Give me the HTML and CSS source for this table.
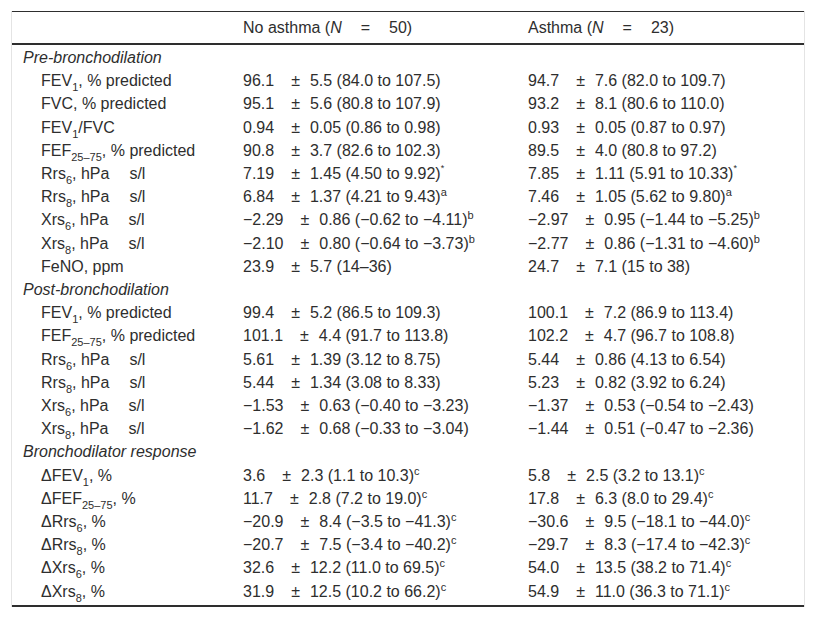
FILE: index.html
```html
<!DOCTYPE html>
<html>
<head>
<meta charset="utf-8">
<link rel="stylesheet" href="styles.css">
</head>
<body>
<div class="frame">
<table class="data">
<colgroup><col class="c1"><col class="c2"><col class="c3"></colgroup>
<thead>
<tr><th></th><th>No asthma (<i>N</i><span class="eq">=</span>50)</th><th>Asthma (<i>N</i><span class="eq">=</span>23)</th></tr>
</thead>
<tbody>
<tr class="sec"><td colspan="3"><i>Pre-bronchodilation</i></td></tr>
<tr><td class="lab">FEV<sub>1</sub>, % predicted</td><td>96.1<span class="pm">±</span>5.5 (84.0 to 107.5)</td><td>94.7<span class="pm">±</span>7.6 (82.0 to 109.7)</td></tr>
<tr><td class="lab">FVC, % predicted</td><td>95.1<span class="pm">±</span>5.6 (80.8 to 107.9)</td><td>93.2<span class="pm">±</span>8.1 (80.6 to 110.0)</td></tr>
<tr><td class="lab">FEV<sub>1</sub>/FVC</td><td>0.94<span class="pm">±</span>0.05 (0.86 to 0.98)</td><td>0.93<span class="pm">±</span>0.05 (0.87 to 0.97)</td></tr>
<tr><td class="lab">FEF<sub>25–75</sub>, % predicted</td><td>90.8<span class="pm">±</span>3.7 (82.6 to 102.3)</td><td>89.5<span class="pm">±</span>4.0 (80.8 to 97.2)</td></tr>
<tr><td class="lab">Rrs<sub>6</sub>, hPa<span class="u">s/l</span></td><td>7.19<span class="pm">±</span>1.45 (4.50 to 9.92)<sup class="st">*</sup></td><td>7.85<span class="pm">±</span>1.11 (5.91 to 10.33)<sup class="st">*</sup></td></tr>
<tr><td class="lab">Rrs<sub>8</sub>, hPa<span class="u">s/l</span></td><td>6.84<span class="pm">±</span>1.37 (4.21 to 9.43)<sup>a</sup></td><td>7.46<span class="pm">±</span>1.05 (5.62 to 9.80)<sup>a</sup></td></tr>
<tr><td class="lab">Xrs<sub>6</sub>, hPa<span class="u">s/l</span></td><td>−2.29<span class="pm">±</span>0.86 (−0.62 to −4.11)<sup>b</sup></td><td>−2.97<span class="pm">±</span>0.95 (−1.44 to −5.25)<sup>b</sup></td></tr>
<tr><td class="lab">Xrs<sub>8</sub>, hPa<span class="u">s/l</span></td><td>−2.10<span class="pm">±</span>0.80 (−0.64 to −3.73)<sup>b</sup></td><td>−2.77<span class="pm">±</span>0.86 (−1.31 to −4.60)<sup>b</sup></td></tr>
<tr><td class="lab">FeNO, ppm</td><td>23.9<span class="pm">±</span>5.7 (14–36)</td><td>24.7<span class="pm">±</span>7.1 (15 to 38)</td></tr>
<tr class="sec"><td colspan="3"><i>Post-bronchodilation</i></td></tr>
<tr><td class="lab">FEV<sub>1</sub>, % predicted</td><td>99.4<span class="pm">±</span>5.2 (86.5 to 109.3)</td><td>100.1<span class="pm">±</span>7.2 (86.9 to 113.4)</td></tr>
<tr><td class="lab">FEF<sub>25–75</sub>, % predicted</td><td>101.1<span class="pm">±</span>4.4 (91.7 to 113.8)</td><td>102.2<span class="pm">±</span>4.7 (96.7 to 108.8)</td></tr>
<tr><td class="lab">Rrs<sub>6</sub>, hPa<span class="u">s/l</span></td><td>5.61<span class="pm">±</span>1.39 (3.12 to 8.75)</td><td>5.44<span class="pm">±</span>0.86 (4.13 to 6.54)</td></tr>
<tr><td class="lab">Rrs<sub>8</sub>, hPa<span class="u">s/l</span></td><td>5.44<span class="pm">±</span>1.34 (3.08 to 8.33)</td><td>5.23<span class="pm">±</span>0.82 (3.92 to 6.24)</td></tr>
<tr><td class="lab">Xrs<sub>6</sub>, hPa<span class="u">s/l</span></td><td>−1.53<span class="pm">±</span>0.63 (−0.40 to −3.23)</td><td>−1.37<span class="pm">±</span>0.53 (−0.54 to −2.43)</td></tr>
<tr><td class="lab">Xrs<sub>8</sub>, hPa<span class="u">s/l</span></td><td>−1.62<span class="pm">±</span>0.68 (−0.33 to −3.04)</td><td>−1.44<span class="pm">±</span>0.51 (−0.47 to −2.36)</td></tr>
<tr class="sec"><td colspan="3"><i>Bronchodilator response</i></td></tr>
<tr><td class="lab">ΔFEV<sub>1</sub>, %</td><td>3.6<span class="pm">±</span>2.3 (1.1 to 10.3)<sup>c</sup></td><td>5.8<span class="pm">±</span>2.5 (3.2 to 13.1)<sup>c</sup></td></tr>
<tr><td class="lab">ΔFEF<sub>25–75</sub>, %</td><td>11.7<span class="pm">±</span>2.8 (7.2 to 19.0)<sup>c</sup></td><td>17.8<span class="pm">±</span>6.3 (8.0 to 29.4)<sup>c</sup></td></tr>
<tr><td class="lab">ΔRrs<sub>6</sub>, %</td><td>−20.9<span class="pm">±</span>8.4 (−3.5 to −41.3)<sup>c</sup></td><td>−30.6<span class="pm">±</span>9.5 (−18.1 to −44.0)<sup>c</sup></td></tr>
<tr><td class="lab">ΔRrs<sub>8</sub>, %</td><td>−20.7<span class="pm">±</span>7.5 (−3.4 to −40.2)<sup>c</sup></td><td>−29.7<span class="pm">±</span>8.3 (−17.4 to −42.3)<sup>c</sup></td></tr>
<tr><td class="lab">ΔXrs<sub>6</sub>, %</td><td>32.6<span class="pm">±</span>12.2 (11.0 to 69.5)<sup>c</sup></td><td>54.0<span class="pm">±</span>13.5 (38.2 to 71.4)<sup>c</sup></td></tr>
<tr><td class="lab">ΔXrs<sub>8</sub>, %</td><td>31.9<span class="pm">±</span>12.5 (10.2 to 66.2)<sup>c</sup></td><td>54.9<span class="pm">±</span>11.0 (36.3 to 71.1)<sup>c</sup></td></tr>
</tbody>
</table>
</div>
</body>
</html>
```

FILE: styles.css
```css
html, body {
  margin: 0;
  padding: 0;
  background: #fff;
}
body {
  padding: 11px 10px 0 11px;
  font-family: "Liberation Sans", Arial, sans-serif;
  font-size: 16px;
  color: #2e2e2e;
}
.frame {
  width: 794px;
  border-left: 1px solid #e4e4e4;
  border-right: 1px solid #e4e4e4;
  box-sizing: border-box;
}
.data {
  width: 100%;
  border-collapse: collapse;
  table-layout: fixed;
  border-top: 1px solid #2e2e2e;
  border-bottom: 2px solid #2e2e2e;
}
.c1 { width: 221px; }
.c2 { width: 285px; }
.c3 { width: 286px; }
.data th {
  font-weight: normal;
  text-align: left;
  padding: 7px 10px 6px 10px;
  line-height: 18px;
  border-bottom: 2px solid #2e2e2e;
}
.data td {
  padding: 3px 10px 3px 10px;
  line-height: 17.2px;
  white-space: nowrap;
  vertical-align: middle;
}
.data tbody tr:first-child td { padding-top: 4px; }
.data tbody tr:last-child td { padding-bottom: 5px; }
.data td.lab { padding-left: 29px; }
.sec td { padding-left: 11px; }
.eq { margin: 0 19px; }
.pm { margin: 0 10px 0 17px; }
.u { margin-left: 20px; }
sub, sup {
  font-size: 11px;
  line-height: 0;
  position: relative;
  vertical-align: baseline;
}
sub { top: 5px; }
sup { top: -6px; }
sup.st { font-size: 9px; top: -8px; }
```
